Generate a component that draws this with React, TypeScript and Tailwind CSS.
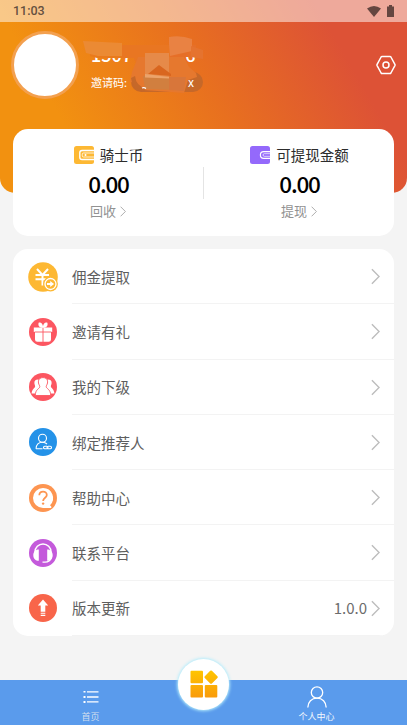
import React from 'react';

interface MenuRow {
  label: string;
  icon: React.ReactNode;
  value?: string;
}

interface BalanceProps {
  icon: React.ReactNode;
  title: string;
  amount: string;
  action: string;
}

const ChevronIcon = ({ className }: { className: string }) => (
  <svg viewBox="0 0 10 18" className={className} fill="none" stroke="currentColor" strokeWidth="1.6">
    <path d="M1 1l8 8-8 8" />
  </svg>
);

const CommissionIcon = () => (
  <svg viewBox="0 0 30 30" className="h-[30px] w-[30px]" fill="none">
    <circle cx="15" cy="15" r="14.8" fill="#fdb833" />
    <path d="M9 7l5.500 6L20 7M14.500 13v10.500M7.500 13h13.500M7.500 17.300h10.500" stroke="#fff" strokeWidth="2" />
    <circle cx="22.500" cy="22" r="7.400" fill="#fdb833" />
    <circle cx="22.500" cy="22" r="5.500" stroke="#fff" strokeWidth="1.300" />
    <path d="M19 21h3.200v-2.100l3.900 3.100-3.900 3.100V23H19z" fill="#fff" />
  </svg>
);

const GiftIcon = () => (
  <svg viewBox="0 0 28 28" className="h-7 w-7" fill="none">
    <circle cx="14" cy="14" r="14" fill="#fc5661" />
    <path d="M4.800 9.500h18.400v4.500h-1.200V21.500q0 2.300-2.300 2.300H8.300Q6 23.800 6 21.500V14H4.800z" fill="#fff" />
    <path d="M14 9.800C10.500 9.800 8.800 8 9.600 4.800c2.400-1 4.200 1.200 4.400 3.700.2-2.500 2-4.700 4.400-3.700.8 3.200-.9 5-4.400 5z" fill="#fff" />
    <path d="M14 10v14M5.500 14h17" stroke="#fc5661" strokeWidth=".9" />
  </svg>
);

const TeamIcon = () => (
  <svg viewBox="0 0 28 28" className="h-7 w-7">
    <circle cx="14" cy="14" r="14" fill="#fc5661" />
    <path
      d="M9 6.500C6.500 6.500 5 8 5.400 10.500c.3 1.600.9 2.100.7 3.200C5.800 15.300 3 15.800 2.600 20.500h6l3-6-1-5 1-2zM19 6.500c2.500 0 4 1.500 3.600 4-.3 1.600-.9 2.100-.7 3.200.3 1.600 3.100 2.100 3.500 6.800h-6l-3-6 1-5-1-2z"
      fill="#fff"
    />
    <path
      d="M14 4.600c-3.500 0-5 2.400-4.500 5.400.3 1.800 1.300 2.500 1.300 3.700 0 2-4.500 2.300-4.500 8.800h15.400c0-6.500-4.500-6.800-4.500-8.800 0-1.200 1-1.900 1.300-3.700.5-3-1-5.400-4.500-5.400z"
      fill="#fff"
      stroke="#fc5661"
      strokeWidth=".9"
    />
  </svg>
);

const BindIcon = () => (
  <svg viewBox="0 0 28 28" className="h-7 w-7" fill="none" stroke="#fff" strokeWidth="1.100">
    <circle cx="14" cy="14" r="14" fill="#2492e8" stroke="none" />
    <circle cx="13.500" cy="10.300" r="4" />
    <path d="M7 20.800c.3-3.800 2.800-6.500 6.500-6.500 2 0 3.300.5 4.500 1.700M7 20.800h6.500" />
    <rect x="14.500" y="18.200" width="4.500" height="2.600" rx="1.300" />
    <rect x="18" y="18.200" width="4.500" height="2.600" rx="1.300" />
  </svg>
);

const HelpIcon = () => (
  <svg viewBox="0 0 28 28" className="h-7 w-7" fill="none">
    <circle cx="14" cy="14" r="14" fill="#fd9551" />
    <path d="M14 4a10 10 0 1 0 0 20h8.300v-1.500l-1.300-1.300A10 10 0 0 0 14 4z" fill="#fff" />
    <path d="M10.300 11.300c0-4.900 7.500-4.900 7.500-.3 0 2.700-3.700 2.800-3.700 6" stroke="#fd9551" strokeWidth="1.800" />
    <circle cx="14.100" cy="19.600" r="1.200" fill="#fd9551" />
  </svg>
);

const SupportIcon = () => (
  <svg viewBox="0 0 28 28" className="h-7 w-7" fill="none">
    <circle cx="14" cy="14" r="14" fill="#c45adb" />
    <path d="M6 14v-1a8 8 0 0 1 16 0v1" stroke="#fff" strokeWidth="1.500" />
    <path d="M9.800 10.500v11.300C6.500 21.800 4.300 19.500 4.300 16.200s2.200-5.700 5.500-5.700zM18.200 10.500v11.300c3.300 0 5.500-2.300 5.500-5.600s-2.200-5.700-5.500-5.700z" fill="#fff" />
    <path d="M22.500 18.500c-1 3-3 4.700-6.500 4.700h-2.500" stroke="#fff" strokeWidth="1.300" />
  </svg>
);

const UpdateIcon = () => (
  <svg viewBox="0 0 28 28" className="h-7 w-7">
    <circle cx="14" cy="14" r="14" fill="#f8654a" />
    <path d="M14 5.500l5.200 6h-2.900v6.200h-4.600v-6.200H8.800zM11.700 18.700h4.600v1h-4.600zM11.700 20.800h4.600v1.200h-4.600z" fill="#fff" />
  </svg>
);

const CoinWalletIcon = () => (
  <svg viewBox="0 0 20 18" className="h-[18px] w-5" fill="none">
    <rect width="20" height="18" rx="2.500" fill="#fdb833" />
    <path d="M20 4.500H8Q5.800 4.500 5.800 6.700v4.600q0 2.200 2.200 2.200h12" stroke="#fff" strokeWidth="1.400" />
    <path d="M20 7H9.500Q8.300 7 8.300 8.200v1.600q0 1.200 1.200 1.200H20" stroke="#fff" strokeWidth=".8" />
    <circle cx="11.500" cy="9" r="1" fill="#fff" />
  </svg>
);

const CashWalletIcon = () => (
  <svg viewBox="0 0 20 18" className="h-[18px] w-5" fill="none">
    <rect width="20" height="18" rx="2.500" fill="#9469fb" />
    <path d="M20 5.700h-6.300a3.300 3.300 0 0 0 0 6.600H20" stroke="#fff" strokeWidth="1.200" />
    <path d="M20 7.700h-5.700a1.300 1.300 0 0 0 0 2.600H20" stroke="#fff" strokeWidth=".7" />
  </svg>
);

const rows: MenuRow[] = [
  { label: '佣金提取', icon: <CommissionIcon /> },
  { label: '邀请有礼', icon: <GiftIcon /> },
  { label: '我的下级', icon: <TeamIcon /> },
  { label: '绑定推荐人', icon: <BindIcon /> },
  { label: '帮助中心', icon: <HelpIcon /> },
  { label: '联系平台', icon: <SupportIcon /> },
  { label: '版本更新', icon: <UpdateIcon />, value: '1.0.0' },
];

const StatusBar = () => (
  <div className="flex h-[22px] items-center justify-between bg-white/50 px-[13px] text-[#65503f]">
    <span className="pt-px font-['Roboto',sans-serif] text-[12.500px] font-medium">11:03</span>
    <div className="flex items-center gap-[6px] text-[#654640]">
      <svg viewBox="0 0 14 11" className="h-[11px] w-[14px]" fill="currentColor">
        <path d="M0 2.500Q7-2.500 14 2.500L7 11z" />
      </svg>
      <svg viewBox="0 0 7 12" className="h-3 w-[7px]" fill="currentColor">
        <path d="M2 0h3v1.500h2V12H0V1.500h2z" />
      </svg>
    </div>
  </div>
);

// Account name and invite code, hidden behind brush strokes
const AccountInfo = () => (
  <svg viewBox="0 0 130 64" className="h-16 w-[130px] font-['Noto_Sans_CJK_SC',sans-serif]" fill="#fff">
    <rect x="49" y="39" width="72" height="20" rx="10" fill="#c66829" />
    <text x="9" y="28.500" fontSize="18" fontWeight="500">1507</text>
    <text x="93" y="28.500" fontSize="18" fontWeight="500">76</text>
    <text x="9" y="53.500" fontSize="11">邀请码:</text>
    <text x="59" y="54" fontSize="12">Q</text>
    <text x="106" y="54" fontSize="12">x</text>
    {/* strokes over the name */}
    <path d="M8 12h33v13H15l-7-2z" fill="#ea7a1b" />
    <path d="M40 12h50v18H54l-2-5H40z" fill="#e97622" />
    <path d="M88 12h26v12H96v5h-8z" fill="#e66f28" />
    <path d="M1 8l39 2v13H16L4 20z" fill="#eb8a34" />
    <path d="M87 11V4q12-2 23 2v12l-22 5z" fill="#e98243" />
    <path d="M109 13l12 4v9l-12-2z" fill="#e5732f" />
    {/* strokes over the invite code */}
    <path d="M56 24h46l5 10 7 6 1 4-9 3-4 13-40-3-9-7-5-1 2-10z" fill="#e6782e" />
    <path d="M49 45q1 11 12 13.500l3-3Q54 53 53 43z" fill="#c66829" />
    <path d="M63 20h24v24H63z" fill="#e68a49" />
    <path d="M61 43l26 1 8 13-32-1z" fill="#d17f3f" />
    <path d="M87 44h17l-2 14-15-1z" fill="#d8763a" />
    <path d="M66 41l11-9 12 9v2z" fill="#d9661f" />
    <path d="M63 41l24 3v1.500l-24-1z" fill="#eba36b" />
    <path d="M60 55q2-1 4 .500" stroke="#fff" strokeWidth="1.200" fill="none" />
  </svg>
);

const Balance: React.FC<BalanceProps> = ({ icon, title, amount, action }) => (
  <div className="flex flex-1 flex-col items-center">
    <div className="flex h-6 items-center gap-[6px] pl-px">
      {icon}
      <span className="text-[14.500px] leading-6 text-[#2c2c2c]">{title}</span>
    </div>
    <div className="mt-[2px] pl-px text-[22.500px] leading-7 font-medium tracking-[-1.200px] text-black">{amount}</div>
    <div className="mt-[2px] flex h-6 items-center gap-1 text-[13px] text-[#929292]">
      {action}
      <ChevronIcon className="h-[11px] w-[6px] text-[#aaa]" />
    </div>
  </div>
);

const Header = () => (
  <header className="h-[193px] rounded-b-[15px] bg-[linear-gradient(60deg,#f29110_20%,#e8701f_52%,#dd5236_82%)]">
    <StatusBar />
    <div className="flex items-start px-[11px] pt-[9px]">
      <div className="h-[68px] w-[68px] shrink-0 rounded-full border-[3px] border-[#f3a04f] bg-white" />
      <div className="ml-[3px] pt-[2px]">
        <AccountInfo />
      </div>
      <svg viewBox="0 0 20 20" className="mt-[24px] ml-auto h-5 w-5" fill="none" stroke="#fff" strokeWidth="1.500">
        <path d="M6 1.500h8q.6 0 .9.500l4 7.400q.3.600 0 1.200l-4 7.400q-.3.500-.9.500H6q-.6 0-.9-.5l-4-7.400q-.3-.6 0-1.200l4-7.400q.3-.5.900-.5z" />
        <circle cx="10" cy="10" r="3" />
      </svg>
    </div>
  </header>
);

const TabBar = () => (
  <nav className="relative mt-auto flex h-[45px] justify-between bg-[#5a9bec] text-[9px] leading-3 text-[#d3dfef]">
    <div className="flex w-[181px] flex-col items-center pt-[11px]">
      <svg viewBox="0 0 16 12" className="h-3 w-4" fill="#fff">
        <path d="M.5 0h2v1.500h-2zM4 .2h11.500v1.300H4zM.5 5h2v2h-2zM4 5.200h11.500v1.600H4zM.5 10h2v2h-2zM4 10.300h11.500v1.300H4z" />
      </svg>
      <span className="mt-[8px]">首页</span>
    </div>
    <div className="flex w-[181px] flex-col items-center pt-[6px]">
      <svg viewBox="0 0 20 22" className="h-[22px] w-5" fill="none" stroke="#fff" strokeWidth="1.300">
        <circle cx="10" cy="6.500" r="5.700" />
        <path d="M.8 21.500C1 16 4.500 12.200 10 12.200S19 16 19.200 21.500" />
      </svg>
      <span className="mt-[3px] text-[#f3f7fd]">个人中心</span>
    </div>
    <div className="absolute -top-[21px] left-[178px] flex h-[51px] w-[51px] items-center justify-center rounded-full bg-white shadow-[0_0_3px_1px_#b5ecfb]">
      <svg viewBox="0 0 28 28" className="mb-px h-7 w-7">
        <defs>
          <linearGradient id="tiles" x1="0" y1="0" x2="0" y2="28" gradientUnits="userSpaceOnUse">
            <stop offset="0" stopColor="#ffc600" />
            <stop offset="1" stopColor="#f99a0b" />
          </linearGradient>
        </defs>
        <g fill="url(#tiles)">
          <rect x=".5" y=".8" width="12.500" height="12.500" rx="1" />
          <rect x=".5" y="15" width="12.500" height="12.500" rx="1" />
          <rect x="14.800" y="15" width="12.500" height="12.500" rx="1" />
          <path d="M20.200.8q.9-.7 1.700 0l5.500 5.500q.8.8 0 1.600l-5.500 5.500q-.8.800-1.700 0l-5.400-5.500q-.8-.8 0-1.600z" />
        </g>
      </svg>
    </div>
  </nav>
);

const App: React.FC = () => (
  <div className="flex h-[725px] w-[407px] flex-col overflow-hidden bg-[#f4f4f4] font-['Noto_Sans_CJK_SC',sans-serif]">
    <Header />
    <section className="mx-[13px] -mt-[64px] flex h-[107px] items-start rounded-[15px] bg-white pt-[14px]">
      <Balance icon={<CoinWalletIcon />} title="骑士币" amount="0.00" action="回收" />
      <div className="mt-[24px] h-8 w-px bg-[#e4e4e4]" />
      <Balance icon={<CashWalletIcon />} title="可提现金额" amount="0.00" action="提现" />
    </section>

    <section className="mx-[13px] mt-[13px] overflow-hidden rounded-[15px] bg-white">
      {rows.map((row) => (
        <div key={row.label} className="flex h-[55.280px] items-center">
          <div className="flex w-[59px] shrink-0 items-center justify-center">{row.icon}</div>
          <div className="flex h-full flex-1 items-center border-b border-[#f3f3f3] pt-px pr-[14px]">
            <span className="text-[14.500px] text-[#5e5e5e]">{row.label}</span>
            <span className="mr-[4px] ml-auto text-[15px] text-[#6c6c6c]">{row.value}</span>
            <ChevronIcon className="h-[17px] w-[9px] text-[#bdbdbd]" />
          </div>
        </div>
      ))}
    </section>
    <TabBar />
  </div>
);

export default App;
